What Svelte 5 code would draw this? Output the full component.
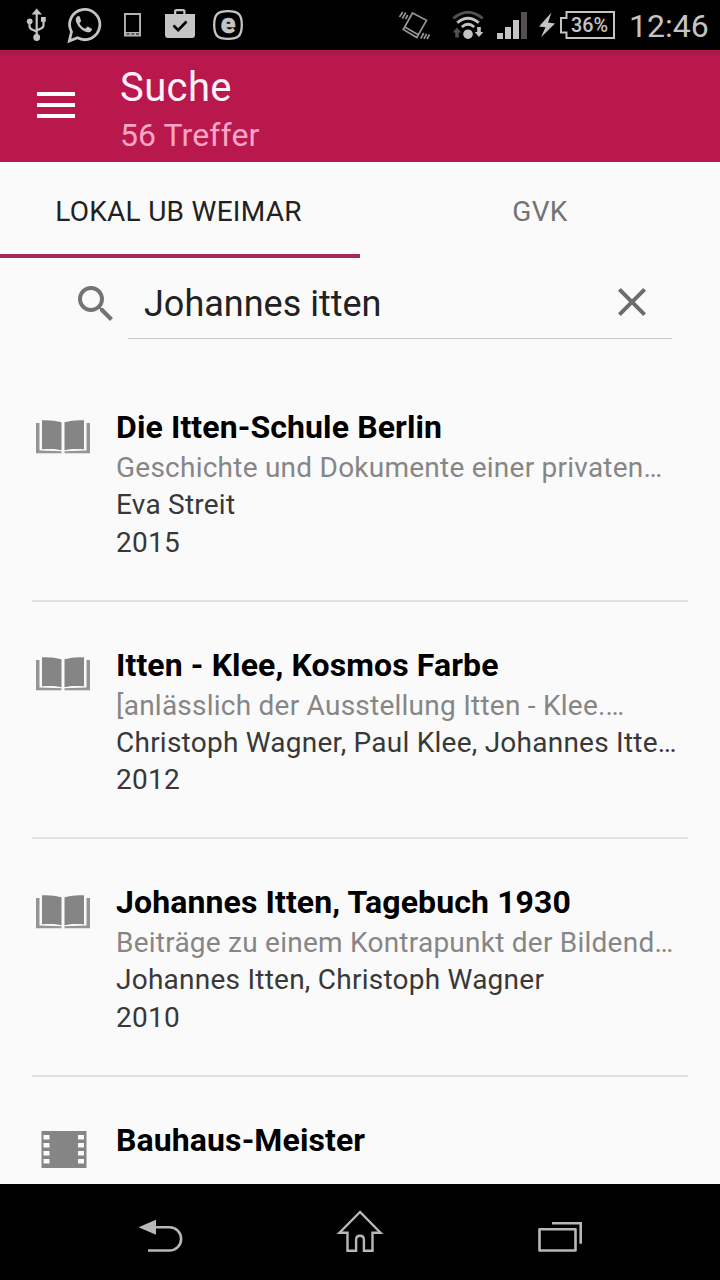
<script>
  const results = [
    { icon: 'book', title: 'Die Itten-Schule Berlin', sub: 'Geschichte und Dokumente einer privaten…', author: 'Eva Streit', year: '2015' },
    { icon: 'book', title: 'Itten - Klee, Kosmos Farbe', sub: '[anlässlich der Ausstellung Itten - Klee.…', author: 'Christoph Wagner, Paul Klee, Johannes Itte…', year: '2012' },
    { icon: 'book', title: 'Johannes Itten, Tagebuch 1930', sub: 'Beiträge zu einem Kontrapunkt der Bildend…', author: 'Johannes Itten, Christoph Wagner', year: '2010' },
    { icon: 'film', title: 'Bauhaus-Meister', sub: '', author: '', year: '' }
  ];
</script>

<div class="screen">
  <div class="status">
    <svg width="24" height="50" viewBox="25 0 24 50" fill="none" stroke="#c4c4c4" stroke-width="2.200">
      <path d="M36.700 14V36M29.500 22v4q0 2.500 2.500 3.500l4.700 2M43.500 20v5q0 2.500-2.500 3.500l-4.300 2" />
      <path d="M31.500 14.500L36.700 8.500l5.300 6z" fill="#c4c4c4" stroke="none" />
      <circle cx="36.700" cy="37.500" r="3.400" fill="#c4c4c4" stroke="none" />
      <circle cx="29.700" cy="21.300" r="2.900" fill="#c4c4c4" stroke="none" />
      <rect x="41" y="17" width="4.800" height="4.800" fill="#c4c4c4" stroke="none" />
    </svg>
    <svg class="whatsapp" width="36" height="50" viewBox="66 0 36 50" fill="none">
      <path d="M69.300 41l2.200-9.200A15.100 15.100 0 1 1 77.500 37.800z" stroke="#c4c4c4" stroke-width="2.800" />
      <path d="M78 16c-2 1-2.700 3.200-2 5.400 1.800 5 5.800 9 10.700 10.700 2.500.8 5-.4 5.400-3.200l-4.400-2.400-2.500 2.300c-2.700-1.200-4.600-3.100-5.700-5.600l1.700-2.200-1.700-4.700z" fill="#c4c4c4" />
    </svg>
    <svg class="phone" width="18" height="50" viewBox="124 0 18 50">
      <path d="M124 13h17v23.500h-17zM125.900 15v17h13.200V15zM126.500 33.500v1h3v-1zM131.300 33.500v1h3v-1zM136 33.500v1h3v-1z" fill="#b4b4b4" fill-rule="evenodd" />
    </svg>
    <svg class="bag" width="30" height="50" viewBox="165 0 30 50">
      <path d="M165 14h9v-2.500q0-2.500 2.500-2.500h6.500q2.500 0 2.500 2.500V14h9.500v21q0 3-3 3h-24q-3 0-3-3zM176.300 14h7v-2.700h-7z" fill="#c4c4c4" fill-rule="evenodd" />
      <path d="M173.500 25.500l4.700 4.700 8.300-8.700" fill="none" stroke="#000" stroke-width="2.600" />
    </svg>
    <svg class="eset" width="32" height="50" viewBox="212 0 32 50">
      <path d="M228 11.200c10.500 0 13.800 3.300 13.800 13.800S238.500 38.800 228 38.800 214.200 35.500 214.200 25 217.500 11.200 228 11.200z" fill="none" stroke="#c4c4c4" stroke-width="2.300" />
      <text x="228" y="33" text-anchor="middle" class="e">e</text>
    </svg>
    <span class="spring"></span>
    <svg width="34" height="50" viewBox="398 0 34 50" fill="none" stroke="#949494" stroke-width="1.700">
      <path d="M412.500 13l14 7.300-9.700 17.200-13.500-8zM404.300 26.800l13.600 7.800" />
      <path d="M399.500 17l3.200-5M402.300 18.500l3.500-6M405.500 19l2.200-4M420.800 38.500l3-5.500M424 38.800l2.600-5M427 39l2.500-4.500" />
    </svg>
    <svg class="wifi" width="34" height="50" viewBox="451 0 34 50" fill="none" stroke="#c4c4c4" stroke-width="2.800">
      <path d="M453.300 18.500q14.700-12.600 29.400 0" stroke="#55504f" />
      <path d="M457.300 22.800q10.700-9.200 21.400 0M461.800 27q6.200-5.400 12.400 0" />
      <circle cx="468" cy="34.200" r="4.800" fill="#c4c4c4" stroke="none" />
      <path d="M457 27.500l4.300 5h-2.500v5h-3.600v-5h-2.500z" fill="#55504f" stroke="none" />
      <path d="M479 37l4.300-5h-2.500v-5h-3.600v5h-2.500z" fill="#c4c4c4" stroke="none" />
    </svg>
    <svg class="signal" width="31" height="50" viewBox="497 0 31 50" fill="#c4c4c4">
      <path d="M497 33h6v6h-6zM505 27h6v12h-6zM513 20h6v19h-6z" />
      <path d="M521 12h6v27h-6z" fill="#55504f" />
    </svg>
    <svg class="battery" width="78" height="50" viewBox="538 0 78 50">
      <path d="M551.500 12.500L539 26.500l6.500.8-4.500 10 14-13.800-7-1z" fill="#c4c4c4" />
      <path d="M566.500 12H614v26h-47.500v-5.500H561V18h5.500z" fill="none" stroke="#c4c4c4" stroke-width="2" />
      <text x="589.500" y="32" text-anchor="middle" class="pct" textLength="37" lengthAdjust="spacingAndGlyphs">36%</text>
    </svg>
    <span class="clock">12:46</span>
  </div>

  <header>
    <svg width="38" height="28" viewBox="0 0 38 28"><path d="M0 0h38v4H0zM0 11h38v4H0zM0 22h38v4H0z" fill="#fff" /></svg>
    <div class="heading">
      <div class="h1">Suche</div>
      <div class="h2">56 Treffer</div>
    </div>
  </header>

  <div class="tabs">
    <div class="tab active">LOKAL UB WEIMAR</div>
    <div class="tab">GVK</div>
  </div>

  <div class="search">
    <svg width="48" height="48" viewBox="0 0 24 24"><path fill="#737373" d="M15.500 14h-.79l-.28-.27C15.410 12.590 16 11.110 16 9.500 16 5.910 13.090 3 9.500 3S3 5.910 3 9.500 5.910 16 9.500 16c1.610 0 3.090-.59 4.230-1.570l.27.28v.79l5 4.990L20.490 19l-4.990-5zm-6 0C7.010 14 5 11.990 5 9.500S7.010 5 9.500 5 14 7.010 14 9.500 11.990 14 9.500 14z" /></svg>
    <div class="field">
      <span>Johannes itten</span>
      <svg width="48" height="48" viewBox="0 0 24 24"><path fill="#6c6c6e" d="M19 6.410L17.590 5 12 10.590 6.410 5 5 6.410 10.590 12 5 17.590 6.410 19 12 13.410 17.590 19 19 17.590 13.410 12z" /></svg>
    </div>
  </div>

  <div class="list">
    {#each results as r}
      <div class="item">
        {#if r.icon === 'book'}
          <svg class="icon" width="56" height="38" viewBox="0 0 56 38">
            <path fill="#959595" d="M1 4h3.500v27.500l22 .8v1.900H1zM55 4h-3.500v27.500l-22 .8v1.900H55z" />
            <path fill="#858585" d="M7 1.300c7-.5 13 .2 19.500 2v28C20 29.500 14 29.800 7 30.300zM49 1.300c-7-.5-13 .2-19.500 2v28c6.500-1.800 12.500-1.500 19.500-1z" />
          </svg>
        {:else}
          <svg class="icon" width="56" height="38" viewBox="0 0 56 38">
            <path fill="#858585" d="M6.500 0h45v37h-45z" />
            <path fill="#fafafa" d="M8.500 4h6v4.500h-6zM8.500 12h6v4.500h-6zM8.500 20h6v4.500h-6zM8.500 28h6v4.500h-6zM43 4h6v4.500h-6zM43 12h6v4.500h-6zM43 20h6v4.500h-6zM43 28h6v4.500h-6z" />
          </svg>
        {/if}
        <div class="text">
          <div class="title">{r.title}</div>
          <div class="line sub">{r.sub}</div>
          <div class="line">{r.author}</div>
          <div class="line">{r.year}</div>
        </div>
      </div>
    {/each}
  </div>

  <nav>
    <svg width="48" height="96" viewBox="136 1184 48 96" fill="none" stroke="#b8b8b8" stroke-width="2.600">
      <path d="M154 1227.300h15.500a11.600 11.600 0 0 1 0 23.200H148" />
      <path d="M138.500 1227.300l17.500-7.500v15z" fill="#b8b8b8" stroke="none" />
    </svg>
    <svg width="48" height="96" viewBox="336 1184 48 96" fill="none" stroke="#b8b8b8" stroke-width="2.400">
      <path d="M360 1212l-20.500 20.700h8v18h8.600v-11q0-4 3.900-4t3.900 4v11h8.600v-18h8z" />
    </svg>
    <svg width="48" height="96" viewBox="536 1184 48 96" fill="none" stroke="#b8b8b8" stroke-width="2.600">
      <path d="M539.500 1229.300h36v21.200h-36z" stroke-linejoin="round" />
      <path d="M552 1223.300h28.700v20.500" />
    </svg>
  </nav>
</div>

<style>
  :global(body) { margin: 0; background: #fafafa; }
  .screen {
    width: 720px; height: 1280px; overflow: hidden;
    display: flex; flex-direction: column;
    background: #fafafa; font-family: Roboto, sans-serif; color: #212121;
  }
  svg { display: block; flex: none; }
  .status { height: 50px; flex: none; display: flex; align-items: center; background: #000; padding: 0 12px 0 25px; box-sizing: border-box; }
  .whatsapp { margin-left: 17px; }
  .phone { margin-left: 22px; }
  .bag { margin-left: 23px; }
  .eset { margin-left: 17px; }
  .e { font: 900 27px Roboto, sans-serif; fill: #c4c4c4; stroke: #c4c4c4; stroke-width: .5; }
  .spring { flex: 1; }
  .wifi { margin-left: 19px; }
  .signal { margin-left: 12px; }
  .battery { margin-left: 10px; }
  .pct { font: 500 20px Roboto, sans-serif; fill: #c4c4c4; }
  .clock { width: 79px; margin-left: 13px; padding-top: 2px; font-size: 32px; line-height: 50px; color: #c4c4c4; white-space: nowrap; }
  header { height: 112px; flex: none; display: flex; align-items: center; background: linear-gradient(#a8184a, #b9184c 8px); padding-left: 37px; box-sizing: border-box; }
  .heading { margin-left: 45px; padding-top: 10px; }
  .h1 { font-size: 40px; line-height: 48px; color: #fff0fa; letter-spacing: .4px; }
  .h2 { font-size: 32px; line-height: 47px; color: #fba6c8; letter-spacing: .1px; }
  .tabs { height: 96px; flex: none; display: grid; grid-template-columns: 1fr 1fr; }
  .tab { box-sizing: border-box; text-align: center; font-size: 28px; line-height: 99px; height: 96px; letter-spacing: .28px; color: #737373; border-bottom: 4px solid transparent; }
  .tab.active { color: #212121; border-color: #a8285a; padding-right: 3px; }
  .search { height: 81px; flex: none; display: flex; padding: 0 48px 0 72px; align-items: center; }
  .search > svg { margin: 10px 8px 0 0; }
  .field { flex: 1; height: 80px; display: flex; align-items: center; justify-content: space-between; border-bottom: 1px solid #cbcbcb; padding: 0 16px; }
  .field span { font-size: 36px; line-height: 48px; margin-top: 11px; }
  .field svg { margin-top: 7px; }
  .list { flex: 1; min-height: 0; overflow: hidden; padding: 25.400px 32px 0; }
  .item { height: 237.500px; box-sizing: border-box; display: flex; padding-top: 42px; border-bottom: 2px solid #e1e1e1; }
  .icon { margin: 12.500px 25px 0 3px; }
  .text { flex: 1; min-width: 0; white-space: nowrap; padding-top: .7px; }
  .title { font-size: 32px; line-height: 41px; padding-bottom: 1px; font-weight: 700; color: #000; letter-spacing: .11px; }
  .line { font-size: 28px; line-height: 37.300px; height: 37.300px; color: #383838; letter-spacing: .24px; }
  .sub { color: #868686; }
  nav { height: 96px; flex: none; display: flex; justify-content: space-between; padding: 0 136px; background: #000; }
</style>
